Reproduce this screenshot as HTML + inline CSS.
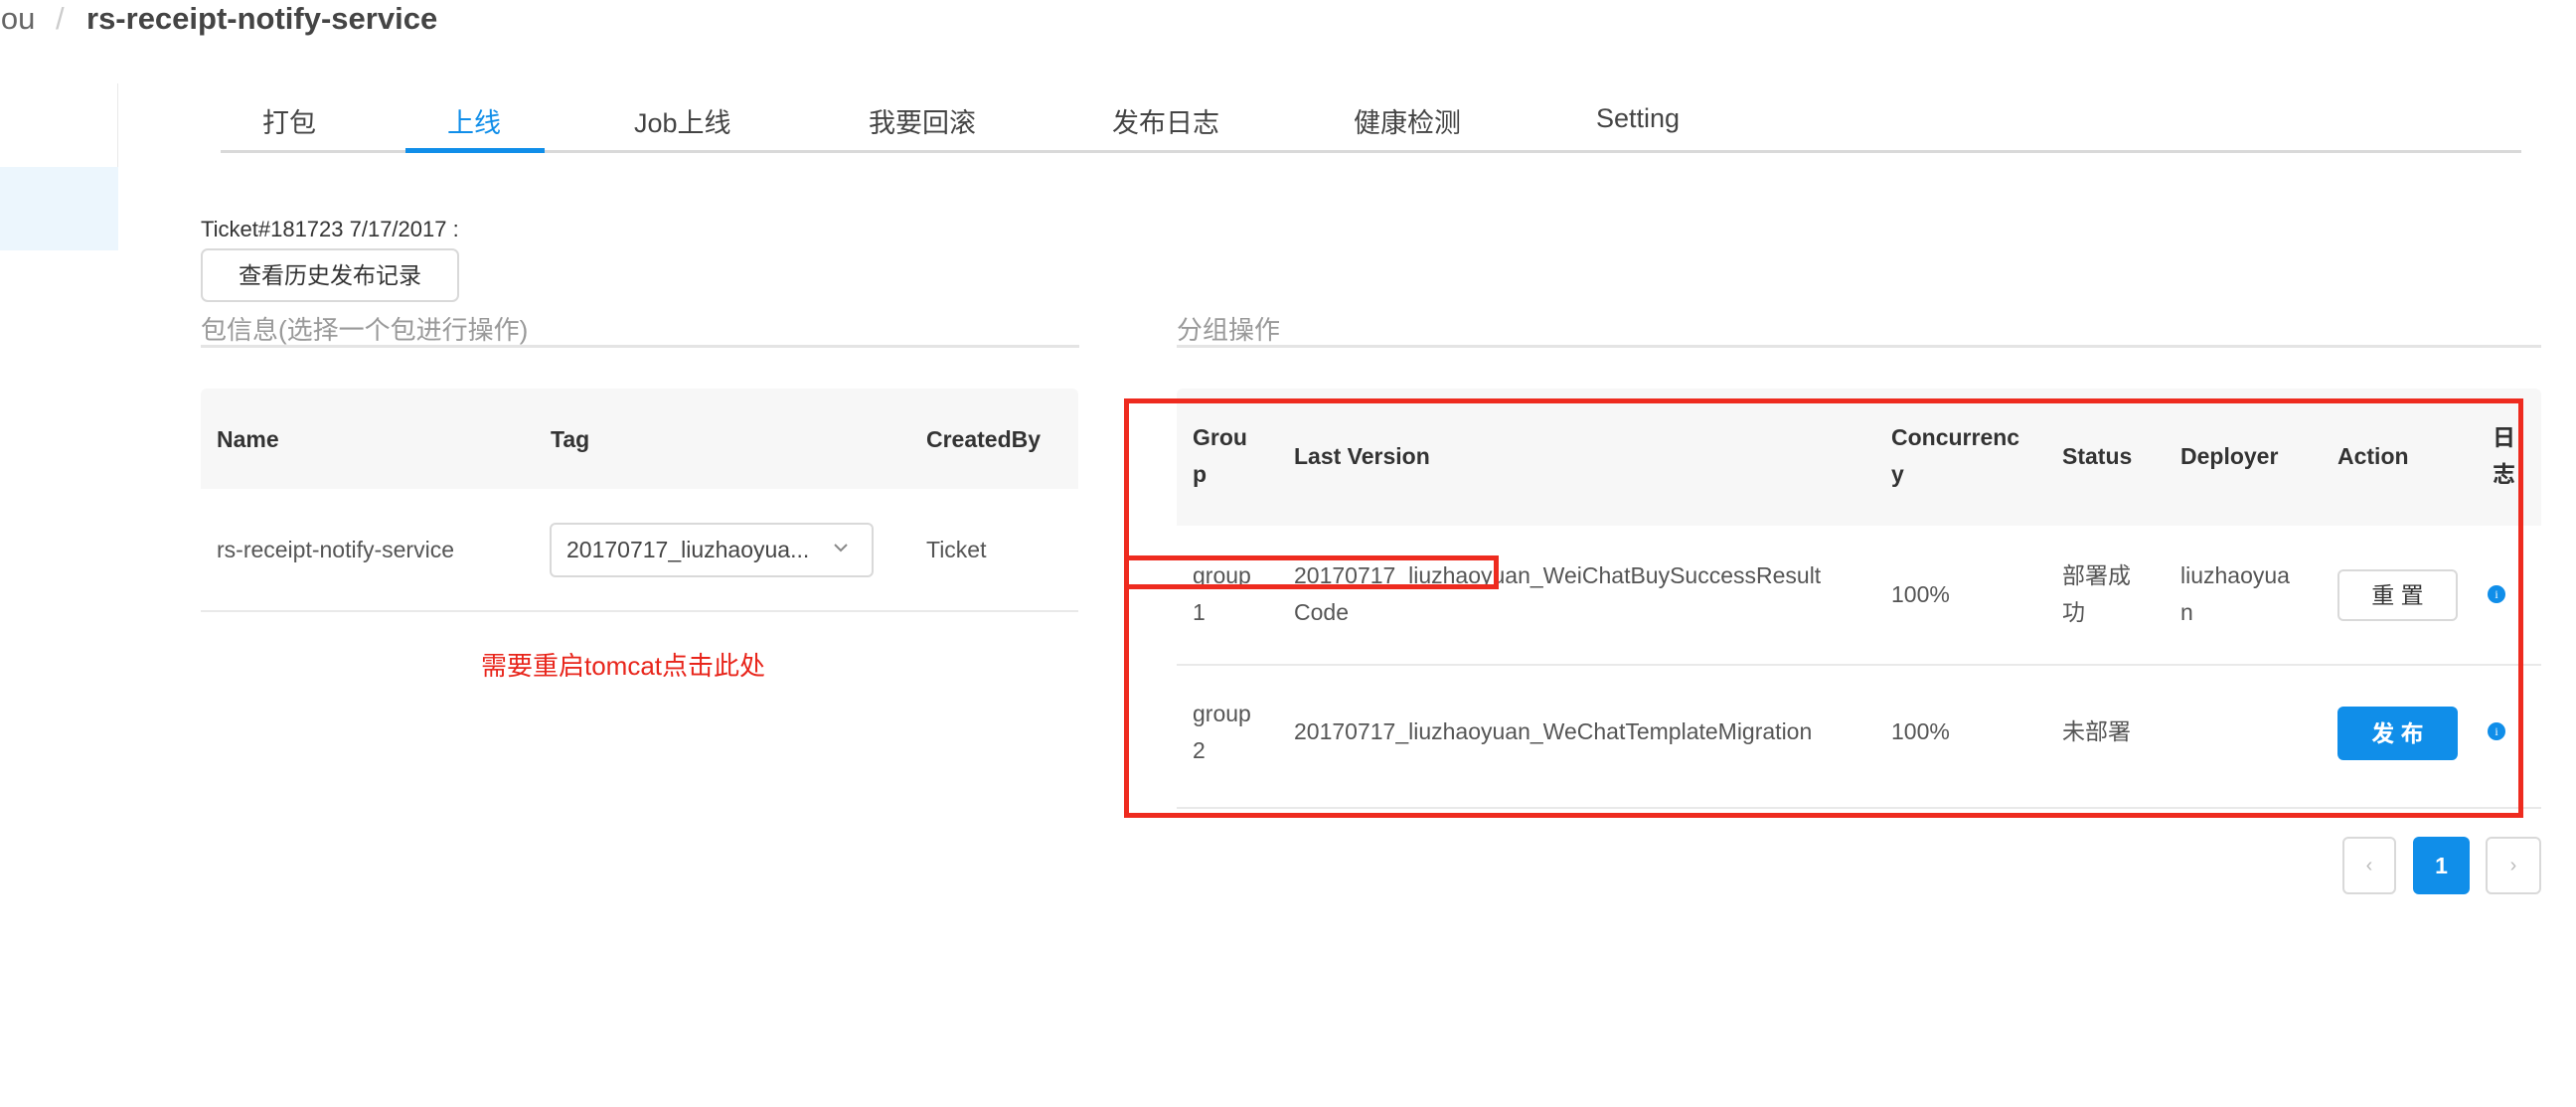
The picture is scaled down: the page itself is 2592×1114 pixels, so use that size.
<!DOCTYPE html>
<html><head><meta charset="utf-8"><style>
*{margin:0;padding:0;box-sizing:border-box}
body{width:2592px;height:1114px;background:#fff;position:relative;overflow:hidden;font-family:"Liberation Sans","Noto Sans CJK SC",sans-serif;color:#555}
.a{position:absolute;white-space:nowrap}
.t{font-size:23px;line-height:37px}
.h{font-size:23px;font-weight:bold;color:#333;line-height:37px}
.tab{font-size:27px;color:#444;top:102px}
</style></head><body>
<div class="a" style="left:-6px;top:0;font-size:31px;color:#666;line-height:38px">jou</div>
<div class="a" style="left:56px;top:0;font-size:31px;color:#ccc;line-height:38px">/</div>
<div class="a" style="left:87px;top:0;font-size:31px;font-weight:bold;color:#444;line-height:38px">rs-receipt-notify-service</div>

<div class="a" style="left:118px;top:84px;width:1px;height:168px;background:#e9e9e9"></div>
<div class="a" style="left:0;top:168px;width:119px;height:84px;background:#ecf6fd"></div>

<div class="a tab" style="left:264px">打包</div>
<div class="a tab" style="left:450px;color:#108ee9">上线</div>
<div class="a tab" style="left:638px">Job上线</div>
<div class="a tab" style="left:874px">我要回滚</div>
<div class="a tab" style="left:1119px">发布日志</div>
<div class="a tab" style="left:1362px">健康检测</div>
<div class="a tab" style="left:1606px;top:104px">Setting</div>
<div class="a" style="left:222px;top:151px;width:2315px;height:3px;background:#d9d9d9"></div>
<div class="a" style="left:408px;top:149px;width:140px;height:5px;background:#108ee9"></div>

<div class="a" style="left:202px;top:218px;font-size:22px;color:#333">Ticket#181723 7/17/2017 :</div>
<div class="a" style="left:202px;top:250px;width:260px;height:54px;border:2px solid #d9d9d9;border-radius:7px;font-size:23px;color:#333;text-align:center;line-height:50px">查看历史发布记录</div>

<div class="a" style="left:202px;top:312px;font-size:26px;color:#999">包信息(选择一个包进行操作)</div>
<div class="a" style="left:202px;top:347px;width:884px;height:3px;background:#e4e4e4"></div>
<div class="a" style="left:1184px;top:312px;font-size:26px;color:#999">分组操作</div>
<div class="a" style="left:1184px;top:347px;width:1373px;height:3px;background:#e4e4e4"></div>

<div class="a" style="left:202px;top:391px;width:883px;height:101px;background:#f7f7f7;border-radius:6px 6px 0 0"></div>
<div class="a h" style="left:218px;top:424px">Name</div>
<div class="a h" style="left:554px;top:424px">Tag</div>
<div class="a h" style="left:932px;top:424px">CreatedBy</div>
<div class="a t" style="left:218px;top:535px">rs-receipt-notify-service</div>
<div class="a" style="left:553px;top:526px;width:326px;height:55px;border:2px solid #d9d9d9;border-radius:6px"></div>
<div class="a t" style="left:570px;top:535px;color:#444">20170717_liuzhaoyua...</div>
<svg class="a" style="left:838px;top:544px" width="16" height="14"><path d="M2 4l6 6 6-6" fill="none" stroke="#888" stroke-width="2"/></svg>
<div class="a t" style="left:932px;top:535px">Ticket</div>
<div class="a" style="left:202px;top:614px;width:883px;height:2px;background:#e9e9e9"></div>
<div class="a" style="left:484px;top:650px;font-size:26px;color:#e8251b">需要重启tomcat点击此处</div>

<div class="a" style="left:1184px;top:391px;width:1373px;height:138px;background:#f7f7f7;border-radius:6px 6px 0 0"></div>
<div class="a h" style="left:1200px;top:422px">Grou<br>p</div>
<div class="a h" style="left:1302px;top:441px">Last Version</div>
<div class="a h" style="left:1903px;top:422px">Concurrenc<br>y</div>
<div class="a h" style="left:2075px;top:441px">Status</div>
<div class="a h" style="left:2194px;top:441px">Deployer</div>
<div class="a h" style="left:2352px;top:441px">Action</div>
<div class="a h" style="left:2508px;top:422px">日<br>志</div>

<div class="a t" style="left:1200px;top:561px">group<br>1</div>
<div class="a t" style="left:1302px;top:561px">20170717_liuzhaoyuan_WeiChatBuySuccessResult<br>Code</div>
<div class="a t" style="left:1903px;top:580px">100%</div>
<div class="a t" style="left:2075px;top:561px">部署成<br>功</div>
<div class="a t" style="left:2194px;top:561px">liuzhaoyua<br>n</div>
<div class="a" style="left:2352px;top:573px;width:121px;height:52px;border:2px solid #d9d9d9;border-radius:6px;text-align:center;line-height:48px;font-size:23px;color:#333">重 置</div>
<div class="a" style="left:2503px;top:589px;width:18px;height:18px;border-radius:50%;background:#108ee9;color:#fff;font-size:12px;text-align:center;line-height:18px;font-family:'Liberation Serif',serif">i</div>
<div class="a" style="left:1184px;top:668px;width:1373px;height:2px;background:#e9e9e9"></div>

<div class="a t" style="left:1200px;top:700px">group<br>2</div>
<div class="a t" style="left:1302px;top:718px">20170717_liuzhaoyuan_WeChatTemplateMigration</div>
<div class="a t" style="left:1903px;top:718px">100%</div>
<div class="a t" style="left:2075px;top:718px">未部署</div>
<div class="a" style="left:2352px;top:711px;width:121px;height:54px;background:#108ee9;border-radius:6px;text-align:center;line-height:54px;font-size:23px;color:#fff;font-weight:bold">发 布</div>
<div class="a" style="left:2503px;top:727px;width:18px;height:18px;border-radius:50%;background:#108ee9;color:#fff;font-size:12px;text-align:center;line-height:18px;font-family:'Liberation Serif',serif">i</div>
<div class="a" style="left:1184px;top:812px;width:1373px;height:2px;background:#e9e9e9"></div>

<div class="a" style="left:2357px;top:842px;width:54px;height:58px;border:2px solid #d9d9d9;border-radius:6px;text-align:center;line-height:54px;color:#bbb;font-size:20px">‹</div>
<div class="a" style="left:2428px;top:842px;width:57px;height:58px;background:#108ee9;border-radius:6px;text-align:center;line-height:58px;color:#fff;font-size:23px;font-weight:bold">1</div>
<div class="a" style="left:2501px;top:842px;width:56px;height:58px;border:2px solid #d9d9d9;border-radius:6px;text-align:center;line-height:54px;color:#bbb;font-size:20px">›</div>

<div class="a" style="left:1131px;top:401px;width:1408px;height:422px;border:5px solid #ee2b1f"></div>
<div class="a" style="left:1131px;top:559px;width:377px;height:34px;border:5px solid #ee2b1f"></div>
</body></html>
